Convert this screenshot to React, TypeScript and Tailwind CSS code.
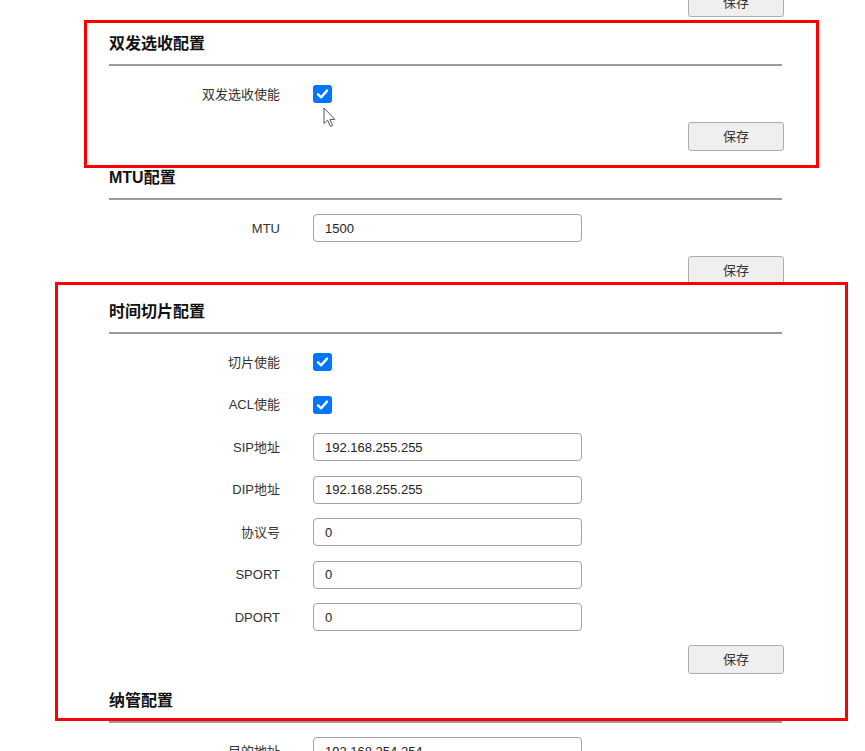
import React from "react";

const FONT = { fontFamily: '"Liberation Sans", Arial, "Noto Sans CJK SC", sans-serif' };

function Check() {
  return (
    <div className="w-[19px] h-[18px] rounded-[3px] bg-[#0075ff] flex items-center justify-center">
      <svg width="13" height="12" viewBox="0 0 13 12">
        <path d="M2 6.3 L5.2 9.3 L11 2.6" fill="none" stroke="#fff" strokeWidth="2.4" strokeLinecap="round" strokeLinejoin="round" />
      </svg>
    </div>
  );
}

function Input({ value }: { value: string }) {
  return (
    <div className="w-[269px] h-[28px] border border-[#a3a3a3] rounded-[4px] bg-white flex items-center pl-[11px] text-[13px] text-[#222]">
      {value}
    </div>
  );
}

function SaveButton() {
  return (
    <button className="w-[96px] h-[29px] bg-[#efefef] border border-[#adadad] rounded-[3px] text-[13px] text-[#333] flex items-center justify-center">
      保存
    </button>
  );
}

type Row = { label: string; check?: boolean; value?: string };

function Section({ title, rows }: { title: string; rows: Row[] }) {
  return (
    <div className="pb-[10px]">
      <div className="h-[32px] pt-[1px] flex items-center text-[16px] font-bold text-[#111]">{title}</div>
      <div className="mt-[5px] h-[2px] bg-[#9a9a9a] mr-[2px]" />
      <div className="pt-[7px]">
        {rows.map((r) => (
          <div key={r.label} className="h-[42.5px] flex items-center">
            <div className="w-[171px] text-right text-[13px] text-[#333]">{r.label}</div>
            <div className="ml-[33px]">{r.check ? <Check /> : <Input value={r.value ?? ""} />}</div>
          </div>
        ))}
      </div>
      <div className="mt-[6.5px] flex justify-end">
        <SaveButton />
      </div>
    </div>
  );
}

export default function App() {
  return (
    <div className="relative w-[865px] h-[751px] overflow-hidden bg-white" style={FONT}>
      <div className="ml-[109px] w-[675px]">
        <div className="h-[17px] flex justify-end items-end">
          <SaveButton />
        </div>
        <div className="h-[10px]" />
        <Section title="双发选收配置" rows={[{ label: "双发选收使能", check: true }]} />
        <Section title="MTU配置" rows={[{ label: "MTU", value: "1500" }]} />
        <Section
          title="时间切片配置"
          rows={[
            { label: "切片使能", check: true },
            { label: "ACL使能", check: true },
            { label: "SIP地址", value: "192.168.255.255" },
            { label: "DIP地址", value: "192.168.255.255" },
            { label: "协议号", value: "0" },
            { label: "SPORT", value: "0" },
            { label: "DPORT", value: "0" },
          ]}
        />
        <Section title="纳管配置" rows={[{ label: "目的地址", value: "192.168.254.254" }]} />
      </div>

      {/* red annotation boxes */}
      <div className="absolute left-[84px] top-[20px] w-[735px] h-[148px] border-[3px] border-[#ff0000] pointer-events-none" />
      <div className="absolute left-[55px] top-[282px] w-[793px] h-[439px] border-[3px] border-[#ff0000] pointer-events-none" />

      {/* mouse cursor */}
      <svg className="absolute left-[323px] top-[107px]" width="14" height="22" viewBox="0 0 14 22">
        <path d="M1 1 L1 16.5 L4.6 13.2 L7.4 19.6 L9.6 18.6 L6.9 12.4 L11.8 12.4 Z" fill="#fff" stroke="#555" strokeWidth="1" strokeLinejoin="round" />
      </svg>
    </div>
  );
}
